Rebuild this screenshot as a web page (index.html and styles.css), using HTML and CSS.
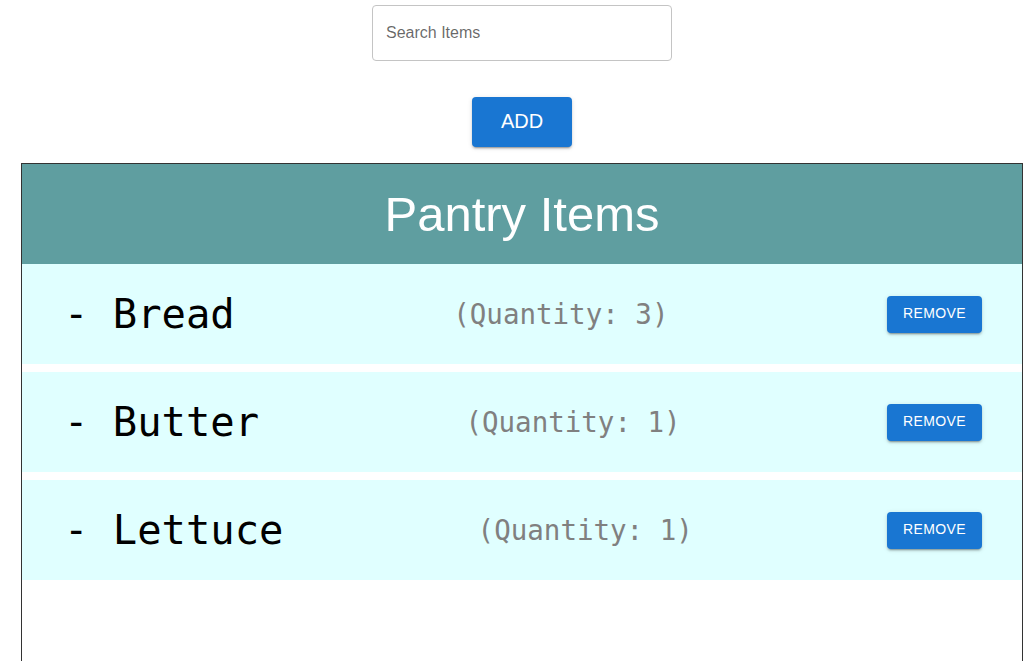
FILE: index.html
```html
<!DOCTYPE html>
<html lang="en">
<head>
<meta charset="utf-8">
<title>Pantry Items</title>
<link rel="stylesheet" href="styles.css">
</head>
<body>
<div class="page">
  <div class="search">
    <input class="search-input" type="text" placeholder="Search Items">
  </div>
  <button class="add-btn">ADD</button>
  <div class="panel">
    <div class="panel-header">
      <h2 class="panel-title">Pantry Items</h2>
    </div>
    <div class="list">
      <div class="row">
        <span class="name">- Bread</span>
        <span class="qty">(Quantity: 3)</span>
        <button class="remove-btn">REMOVE</button>
      </div>
      <div class="row">
        <span class="name">- Butter</span>
        <span class="qty">(Quantity: 1)</span>
        <button class="remove-btn">REMOVE</button>
      </div>
      <div class="row">
        <span class="name">- Lettuce</span>
        <span class="qty">(Quantity: 1)</span>
        <button class="remove-btn">REMOVE</button>
      </div>
    </div>
  </div>
</div>
</body>
</html>
```

FILE: styles.css
```css
html, body {
  margin: 0;
  padding: 0;
  background: #ffffff;
  overflow: hidden;
}

body {
  font-family: "Liberation Sans", Arial, sans-serif;
}

.page {
  width: 1002px;
  margin-left: 21px;
  display: flex;
  flex-direction: column;
  align-items: center;
  padding-top: 5px;
}

.search {
  width: 300px;
  height: 56px;
}

.search-input {
  box-sizing: border-box;
  width: 300px;
  height: 56px;
  border: 1px solid #c4c4c4;
  border-radius: 4px;
  padding: 0 13px;
  font-family: "Liberation Sans", Arial, sans-serif;
  font-size: 16px;
  color: rgba(0, 0, 0, 0.87);
  outline: none;
  background: #fff;
}

.search-input::placeholder {
  color: rgba(0, 0, 0, 0.6);
  opacity: 1;
}

.add-btn {
  margin-top: 36px;
  width: 100px;
  height: 50px;
  border: none;
  border-radius: 4px;
  background: #1976d2;
  color: #fff;
  font-family: "Liberation Sans", Arial, sans-serif;
  font-size: 20px;
  line-height: 1;
  padding: 0 0 2px;
  box-shadow: 0 3px 1px -2px rgba(0,0,0,0.2), 0 2px 2px 0 rgba(0,0,0,0.14), 0 1px 5px 0 rgba(0,0,0,0.12);
}

.panel {
  margin-top: 16px;
  width: 1000px;
  border: 1px solid #333;
}

.panel-header {
  height: 100px;
  background: #5f9ea0;
  display: flex;
  align-items: center;
  justify-content: center;
}

.panel-title {
  margin: 0;
  color: #fff;
  font-family: "Liberation Sans", Arial, sans-serif;
  font-weight: 400;
  font-size: 49px;
}

.list {
  height: 420px;
  display: flex;
  flex-direction: column;
  gap: 8px;
}

.row {
  height: 100px;
  background: #e0ffff;
  display: flex;
  align-items: center;
  justify-content: space-between;
  padding: 0 40px 0 42px;
}

.name {
  font-family: "DejaVu Sans Mono", monospace;
  font-size: 40.5px;
  color: #000;
}

.qty {
  font-family: "DejaVu Sans Mono", monospace;
  font-size: 27.5px;
  color: #808080;
}

.remove-btn {
  width: 95px;
  height: 37px;
  border: none;
  border-radius: 4px;
  background: #1976d2;
  color: #fff;
  font-family: "Liberation Sans", Arial, sans-serif;
  font-size: 14px;
  line-height: 1;
  letter-spacing: 0.4px;
  padding: 0 0 2px;
  box-shadow: 0 3px 1px -2px rgba(0,0,0,0.2), 0 2px 2px 0 rgba(0,0,0,0.14), 0 1px 5px 0 rgba(0,0,0,0.12);
}
```
